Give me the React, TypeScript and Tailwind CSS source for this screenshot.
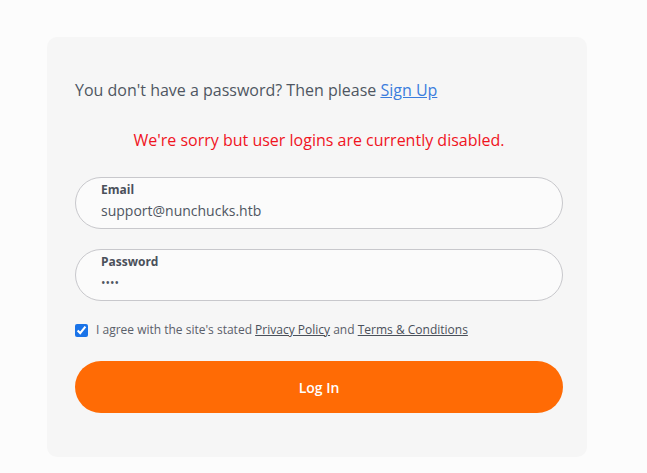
export default function App() {
  return (
    <div
      className="min-h-screen bg-[#fcfcfc] pt-[37px] pl-[47px]"
      style={{ fontFamily: '"Open Sans", "Noto Sans", sans-serif' }}
    >
      <div className="w-[540px] h-[420px] bg-[#f6f6f6] rounded-[10px] pl-[28px] pr-[24px] pt-[41px]">
        <p className="text-[16px] leading-[24px] text-[#4f5662]">
          You don't have a password? Then please{' '}
          <a href="#" className="text-[#3b7ddd] underline">
            Sign Up
          </a>
        </p>

        <p className="mt-[26px] text-center text-[16px] leading-[24px] text-[#f0141e]">
          We're sorry but user logins are currently disabled.
        </p>

        <div className="mt-[25px] h-[52px] rounded-full border border-[#c8c8cc] bg-[#fbfbfb] pl-[25px] pt-[4px]">
          <div className="text-[12px] leading-[16px] font-bold text-[#4a505a]">Email</div>
          <div className="mt-[2px] text-[14px] leading-[22px] text-[#4f5662]">support@nunchucks.htb</div>
        </div>

        <div className="mt-[20px] h-[52px] rounded-full border border-[#c8c8cc] bg-[#fbfbfb] pl-[25px] pt-[4px]">
          <div className="text-[12px] leading-[16px] font-bold text-[#4a505a]">Password</div>
          <div className="mt-[2px] text-[12px] leading-[22px] text-[#4f5662] tracking-[0px]">••••</div>
        </div>

        <label className="mt-[20px] flex items-center gap-[8px] h-[18px] text-[12px] text-[#5a606a]">
          <input type="checkbox" defaultChecked className="w-[13px] h-[13px] accent-[#1a73e8] m-0" />
          <span>
            I agree with the site's stated{' '}
            <a href="#" className="underline text-[#4a505a]">Privacy Policy</a> and{' '}
            <a href="#" className="underline text-[#4a505a]">Terms &amp; Conditions</a>
          </span>
        </label>

        <button className="mt-[22px] w-full h-[52px] rounded-full bg-[#ff6b05] text-white text-[14px] font-semibold">
          Log In
        </button>
      </div>
    </div>
  );
}
